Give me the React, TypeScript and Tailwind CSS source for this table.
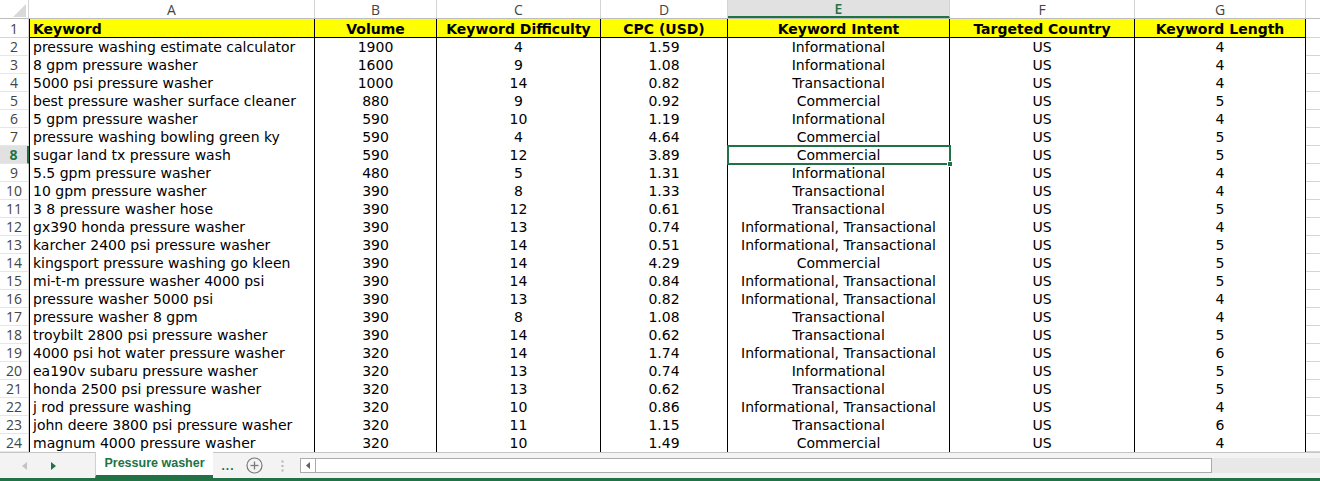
import React from 'react';

type Row = [string, string, string, string, string, string, string];

const ROWS: Row[] = [
  ['pressure washing estimate calculator', '1900', '4', '1.59', 'Informational', 'US', '4'],
  ['8 gpm pressure washer', '1600', '9', '1.08', 'Informational', 'US', '4'],
  ['5000 psi pressure washer', '1000', '14', '0.82', 'Transactional', 'US', '4'],
  ['best pressure washer surface cleaner', '880', '9', '0.92', 'Commercial', 'US', '5'],
  ['5 gpm pressure washer', '590', '10', '1.19', 'Informational', 'US', '4'],
  ['pressure washing bowling green ky', '590', '4', '4.64', 'Commercial', 'US', '5'],
  ['sugar land tx pressure wash', '590', '12', '3.89', 'Commercial', 'US', '5'],
  ['5.5 gpm pressure washer', '480', '5', '1.31', 'Informational', 'US', '4'],
  ['10 gpm pressure washer', '390', '8', '1.33', 'Transactional', 'US', '4'],
  ['3 8 pressure washer hose', '390', '12', '0.61', 'Transactional', 'US', '5'],
  ['gx390 honda pressure washer', '390', '13', '0.74', 'Informational, Transactional', 'US', '4'],
  ['karcher 2400 psi pressure washer', '390', '14', '0.51', 'Informational, Transactional', 'US', '5'],
  ['kingsport pressure washing go kleen', '390', '14', '4.29', 'Commercial', 'US', '5'],
  ['mi-t-m pressure washer 4000 psi', '390', '14', '0.84', 'Informational, Transactional', 'US', '5'],
  ['pressure washer 5000 psi', '390', '13', '0.82', 'Informational, Transactional', 'US', '4'],
  ['pressure washer 8 gpm', '390', '8', '1.08', 'Transactional', 'US', '4'],
  ['troybilt 2800 psi pressure washer', '390', '14', '0.62', 'Transactional', 'US', '5'],
  ['4000 psi hot water pressure washer', '320', '14', '1.74', 'Informational, Transactional', 'US', '6'],
  ['ea190v subaru pressure washer', '320', '13', '0.74', 'Informational', 'US', '5'],
  ['honda 2500 psi pressure washer', '320', '13', '0.62', 'Transactional', 'US', '5'],
  ['j rod pressure washing', '320', '10', '0.86', 'Informational, Transactional', 'US', '4'],
  ['john deere 3800 psi pressure washer', '320', '11', '1.15', 'Transactional', 'US', '6'],
  ['magnum 4000 pressure washer', '320', '10', '1.49', 'Commercial', 'US', '4'],
];

const HEADERS = ['Keyword', 'Volume', 'Keyword Difficulty', 'CPC (USD)', 'Keyword Intent', 'Targeted Country', 'Keyword Length'];

// column widths, written out so tailwind picks them up
const COLS = [
  { letter: 'A', w: 'w-[286px]' },
  { letter: 'B', w: 'w-[122px]' },
  { letter: 'C', w: 'w-[164px]' },
  { letter: 'D', w: 'w-[127px]' },
  { letter: 'E', w: 'w-[222px]' },
  { letter: 'F', w: 'w-[185px]' },
  { letter: 'G', w: 'w-[171px]' },
];

const cellFont = "font-['DejaVu_Sans',sans-serif] text-[14px] leading-none text-black";
const uiFont = "font-['Open_Sans','DejaVu_Sans',sans-serif]";

function ColumnHeader() {
  return (
    <div className="flex h-[19px] border-b border-[#bdbdbd]">
      <div className="relative w-[29px] shrink-0 border-r border-[#d4d4d4] bg-white">
        <svg className="absolute right-[2px] bottom-[1px]" width="13" height="13" viewBox="0 0 13 13">
          <polygon points="13,0 13,13 0,13" fill="#d9d9d9" />
        </svg>
      </div>
      {COLS.map(c => {
        const active = c.letter === 'E';
        return (
          <div
            key={c.letter}
            className={`${c.w} shrink-0 flex items-center justify-center border-r border-[#d4d4d4] text-[14px] ${uiFont} ${
              active ? 'bg-[#e1e1e1] text-[#217346] font-semibold border-b-2 border-b-[#217346]' : 'bg-white text-[#444]'
            }`}
          >
            {c.letter}
          </div>
        );
      })}
      <div className="flex-1 bg-white" />
    </div>
  );
}

function TitleRow() {
  return (
    <div className="flex h-[19px]">
      <div className={`w-[29px] shrink-0 flex items-center justify-center border-r border-b border-[#d4d4d4] text-[14px] text-[#444] ${uiFont}`}>1</div>
      {HEADERS.map((h, i) => (
        <div
          key={h}
          className={`${COLS[i].w} shrink-0 flex items-center pt-px bg-[#ffff00] border-r border-b border-black font-bold whitespace-nowrap overflow-hidden ${cellFont} ${
            i === 0 ? 'border-l pl-[3px]' : 'justify-center'
          }`}
        >
          {h}
        </div>
      ))}
      <div className="flex-1 border-b border-[#d4d4d4]" />
    </div>
  );
}

function DataRow({ n, row }: { n: number; row: Row }) {
  const active = n === 8;
  return (
    <div className="flex h-[18px]">
      <div
        className={`w-[29px] shrink-0 flex items-center justify-center border-b border-[#e6e6e6] text-[14px] ${uiFont} ${
          active ? 'bg-[#e1e1e1] text-[#217346] font-bold border-r-2 border-r-[#217346]' : 'text-[#444] border-r border-r-[#d4d4d4]'
        }`}
      >
        {n}
      </div>
      {row.map((v, i) => (
        <div
          key={i}
          className={`${COLS[i].w} shrink-0 flex items-center bg-white border-r border-black whitespace-nowrap overflow-hidden ${cellFont} ${
            i === 0 ? 'border-l pl-[3px]' : 'justify-center'
          }`}
        >
          {v}
        </div>
      ))}
      <div className="flex-1 border-b border-[#d4d4d4]" />
    </div>
  );
}

function SheetTabs() {
  return (
    <div className="flex h-[26px] items-stretch bg-[#f3f3f3] border-t border-[#c6c6c6]">
      <div className="w-[95px] shrink-0 flex items-center">
        <svg className="ml-[22px]" width="5" height="8" viewBox="0 0 5 8">
          <polygon points="5,0 5,8 0,4" fill="#c3c3c3" />
        </svg>
        <svg className="ml-[24px]" width="5" height="8" viewBox="0 0 5 8">
          <polygon points="0,0 0,8 5,4" fill="#217346" />
        </svg>
      </div>
      <div className="w-[118px] shrink-0 -mt-px bg-white border-l border-[#d0d0d0] border-b-[3px] border-b-[#217346] flex items-center justify-center">
        <span className="font-['Liberation_Sans',sans-serif] font-bold text-[12.5px] text-[#217346]">Pressure washer</span>
      </div>
      <div className="w-[30px] shrink-0 flex items-center justify-center">
        <span className="font-['Liberation_Sans',sans-serif] font-bold text-[12px] text-[#217346] tracking-[1px]">...</span>
      </div>
      <div className="w-[22px] shrink-0 flex items-center justify-center">
        <svg width="17" height="17" viewBox="0 0 17 17">
          <circle cx="8.5" cy="8.5" r="7.5" fill="none" stroke="#7a7a7a" strokeWidth="1.2" />
          <line x1="8.5" y1="4.5" x2="8.5" y2="12.5" stroke="#7a7a7a" strokeWidth="1.3" />
          <line x1="4.5" y1="8.5" x2="12.5" y2="8.5" stroke="#7a7a7a" strokeWidth="1.3" />
        </svg>
      </div>
      <div className="w-[35px] shrink-0 flex items-center justify-center">
        <svg width="3" height="12" viewBox="0 0 3 12">
          <rect x="0.5" y="0.5" width="2" height="2" fill="#b5b5b5" />
          <rect x="0.5" y="5" width="2" height="2" fill="#b5b5b5" />
          <rect x="0.5" y="9.5" width="2" height="2" fill="#b5b5b5" />
        </svg>
      </div>
      <div className="flex items-center">
        <div className="flex h-[15px]">
          <div className="w-[16px] bg-white border border-[#ababab] flex items-center justify-center">
            <svg width="4" height="7" viewBox="0 0 4 7">
              <polygon points="4,0 4,7 0,3.5" fill="#606060" />
            </svg>
          </div>
          <div className="w-[896px] bg-white border border-l-0 border-[#ababab]" />
        </div>
      </div>
      <div className="flex-1 flex items-center">
        <div className="w-full h-[15px] bg-[#e8e8e8]" />
      </div>
    </div>
  );
}

export default function App() {
  return (
    <div className="w-[1320px] h-[481px] overflow-hidden bg-white flex flex-col">
      <div className="relative h-[452px] shrink-0 overflow-hidden">
        <ColumnHeader />
        <TitleRow />
        {ROWS.map((r, i) => (
          <DataRow key={i} n={i + 2} row={r} />
        ))}
        {/* active cell E8 */}
        <div className="absolute left-[727px] top-[145px] w-[224px] h-[20px] border-2 border-[#217346]">
          <div className="absolute -right-[4px] -bottom-[4px] w-[6px] h-[6px] bg-[#217346] border border-white" />
        </div>
      </div>
      <SheetTabs />
      <div className="h-[3px] bg-[#217346]" />
    </div>
  );
}
